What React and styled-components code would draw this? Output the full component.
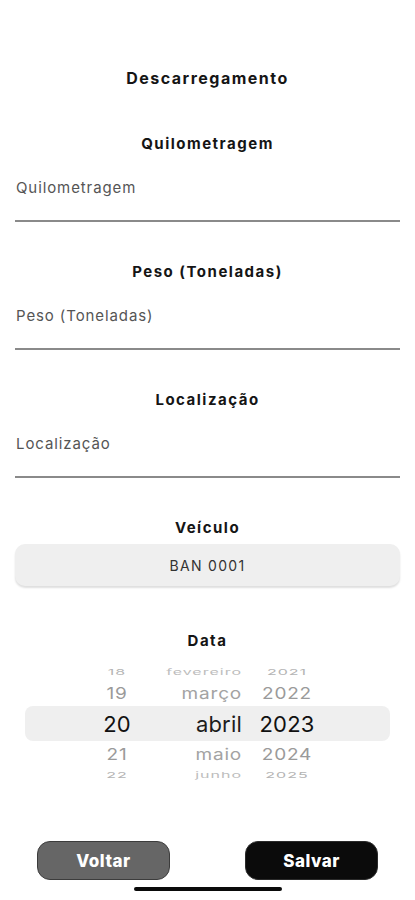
import React from "react";
import styled, { createGlobalStyle } from "styled-components";

const Global = createGlobalStyle`
  html, body { margin: 0; padding: 0; background: #ffffff; }
  body { font-family: Inter, "Noto Sans", "Liberation Sans", sans-serif; color: #111; }
`;

const Page = styled.div`
  width: 415px;
  min-height: 900px;
  box-sizing: border-box;
  padding: 68px 15px 0;
  display: flex;
  flex-direction: column;
`;

const Title = styled.h1`
  margin: 0 0 46px;
  font-size: 16px;
  line-height: 20px;
  font-weight: 700;
  letter-spacing: 1.5px;
  text-align: center;
  color: #151515;
`;

const Section = styled.div`
  display: flex;
  flex-direction: column;
  margin-bottom: ${(p) => p.$mb ?? 40}px;
`;

const Label = styled.div`
  font-size: 15px;
  line-height: 20px;
  font-weight: 700;
  letter-spacing: 1.5px;
  text-align: center;
  color: #151515;
`;

const Field = styled.div`
  height: 68px;
  box-sizing: border-box;
  display: flex;
  align-items: center;
  padding-left: 1px;
  border-bottom: 2px solid #8a8a8a;
  font-size: 15px;
  letter-spacing: 0.9px;
  color: #555555;
`;

const SelectBox = styled.div`
  margin-top: 6px;
  height: 42px;
  border-radius: 10px;
  background: #efefef;
  box-shadow: 0 2px 2px rgba(0, 0, 0, 0.13);
  display: flex;
  align-items: center;
  justify-content: center;
  font-size: 14px;
  letter-spacing: 1.3px;
  color: #333;
`;

const Picker = styled.div`
  margin: 13px 10px 0;
  display: flex;
  flex-direction: column;
`;

const Row = styled.div`
  height: ${(p) => p.$h}px;
  display: grid;
  grid-template-columns: 60px 95px 58px;
  padding-left: 62px;
  align-items: center;
  border-radius: 8px;
  background: ${(p) => (p.$selected ? "#efefef" : "transparent")};
  color: ${(p) => p.$color};
  font-size: ${(p) => p.$fs}px;
  overflow: hidden;
`;

const Cell = styled.span`
  display: block;
  white-space: nowrap;
  line-height: 1;
  transform: scaleY(${(p) => p.$sy});
  text-align: ${(p) => p.$align};
  letter-spacing: ${(p) => p.$ls ?? 0}px;
`;

const MonthCell = styled(Cell)`
  color: ${(p) => p.$mcolor};
`;

const YearCell = styled(Cell)`
  margin-left: 16px;
  width: 58px;
`;

const Buttons = styled.div`
  margin-top: 60px;
  padding: 0 22px;
  display: flex;
  justify-content: space-between;
`;

const Button = styled.button`
  width: 133px;
  height: 39px;
  border-radius: 13px;
  border: 1.5px solid ${(p) => (p.$dark ? "#2a2a2a" : "#3c3c3c")};
  background: ${(p) => (p.$dark ? "#0b0b0b" : "#666666")};
  color: #ffffff;
  font-family: Inter, "Noto Sans", "Liberation Sans", sans-serif;
  font-size: 17px;
  font-weight: 800;
  letter-spacing: 0.5px;
  padding: 0;
`;

const HomeIndicator = styled.div`
  align-self: center;
  margin-top: 7px;
  width: 148px;
  height: 4px;
  border-radius: 2px;
  background: #0a0a0a;
`;

const rows = [
  { d: "18", m: "fevereiro", y: "2021", h: 16, fs: 16, sy: 0.5, color: "#b4b4b4", mcolor: "#bdbdbd", ls: 1 },
  { d: "19", m: "março", y: "2022", h: 26, fs: 19, sy: 0.85, color: "#9a9a9a", mcolor: "#a3a3a3", ls: 0.8 },
  { d: "20", m: "abril", y: "2023", h: 35, fs: 22, sy: 1, color: "#111111", mcolor: "#1c1c1c", selected: true, ls: 0.2 },
  { d: "21", m: "maio", y: "2024", h: 26, fs: 19, sy: 0.85, color: "#9a9a9a", mcolor: "#a3a3a3", ls: 0.8 },
  { d: "22", m: "junho", y: "2025", h: 14, fs: 16, sy: 0.5, color: "#b4b4b4", mcolor: "#bdbdbd", ls: 1 },
];

export default function App() {
  return (
    <>
      <Global />
      <Page>
        <Title>Descarregamento</Title>
        <Section>
          <Label>Quilometragem</Label>
          <Field>Quilometragem</Field>
        </Section>
        <Section>
          <Label>Peso (Toneladas)</Label>
          <Field>Peso (Toneladas)</Field>
        </Section>
        <Section>
          <Label>Localização</Label>
          <Field>Localização</Field>
        </Section>
        <Section $mb={45}>
          <Label>Veículo</Label>
          <SelectBox>BAN 0001</SelectBox>
        </Section>
        <Label>Data</Label>
        <Picker>
          {rows.map((r) => (
            <Row key={r.d} $h={r.h} $fs={r.fs} $color={r.color} $selected={r.selected}>
              <Cell $sy={r.sy} $align="center" $ls={r.ls}>{r.d}</Cell>
              <MonthCell $sy={r.sy} $align="right" $mcolor={r.mcolor} $ls={r.ls}>{r.m}</MonthCell>
              <YearCell $sy={r.sy} $align="center" $ls={r.ls}>{r.y}</YearCell>
            </Row>
          ))}
        </Picker>
        <Buttons>
          <Button>Voltar</Button>
          <Button $dark>Salvar</Button>
        </Buttons>
        <HomeIndicator />
      </Page>
    </>
  );
}
